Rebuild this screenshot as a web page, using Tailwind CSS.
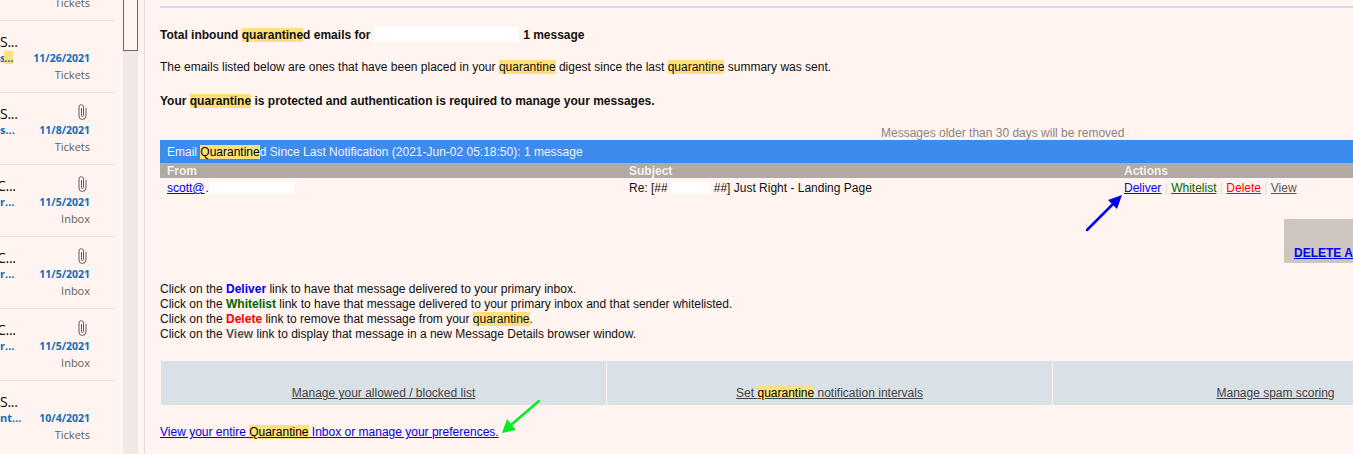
<!DOCTYPE html>
<html>
<head>
<meta charset="utf-8">
<script src="https://cdn.jsdelivr.net/npm/@tailwindcss/browser@4"></script>
</head>
<body class="m-0 bg-[#fff4ef]">
<div class="relative flex w-[1353px] h-[454px] overflow-hidden bg-[#fff4ef] font-['Liberation_Sans',Arial,sans-serif] text-[12px] text-[#111]">

  <!-- Message list -->
  <aside class="flex w-[145px] h-[454px] shrink-0 border-r border-[#e3dcd8] font-['Open_Sans',sans-serif]">
    <div class="w-[115px] shrink-0 -mt-[52px] overflow-hidden">
      <div class="relative h-[73px] border-b border-[#e6deda]">
        <div class="absolute right-[25px] top-[47px] text-[11px] leading-[16px] text-[#605e5c]">Tickets</div>
      </div>
      <div class="relative h-[72px] border-b border-[#e6deda]">
        <div class="absolute left-0 top-[11px] text-[14px] leading-[20px] tracking-[-0.3px] text-black">S...</div>
        <div class="absolute left-0 top-[30px] flex text-[11px] leading-[13px] font-bold text-[#0f6cbd]"><span class="w-[4px] overflow-hidden">s</span><span class="w-[9px] bg-[#ffe07c]">...</span></div>
        <div class="absolute right-[25px] top-[29px] text-[10.5px] leading-[16px] font-bold text-[#0f6cbd]">11/26/2021</div>
        <div class="absolute right-[25px] top-[46px] text-[11px] leading-[16px] text-[#605e5c]">Tickets</div>
      </div>
      <div class="relative h-[72px] border-b border-[#e6deda]">
        <div class="absolute left-0 top-[11px] text-[14px] leading-[20px] tracking-[-0.3px] text-black">S...</div>
        <div class="absolute right-[28px] top-[11px]"><svg class="block" width="9" height="16" viewBox="0 0 9 16" fill="none" stroke="#605e5c" stroke-width="1"><path d="M3.5 4V11.5a1 1 0 0 0 2 0V3a2.25 2.25 0 0 0-4.5 0V12a3.5 3.5 0 0 0 7 0V4"/></svg></div>
        <div class="absolute left-0 top-[29px] text-[11px] leading-[15px] font-bold text-[#0f6cbd]">s...</div>
        <div class="absolute right-[25px] top-[29px] text-[10.5px] leading-[16px] font-bold text-[#0f6cbd]">11/8/2021</div>
        <div class="absolute right-[25px] top-[46px] text-[11px] leading-[16px] text-[#605e5c]">Tickets</div>
      </div>
      <div class="relative h-[72px] border-b border-[#e6deda]">
        <div class="absolute -left-[3px] top-[11px] text-[14px] leading-[20px] tracking-[-0.3px] text-black">C...</div>
        <div class="absolute right-[28px] top-[11px]"><svg class="block" width="9" height="16" viewBox="0 0 9 16" fill="none" stroke="#605e5c" stroke-width="1"><path d="M3.5 4V11.5a1 1 0 0 0 2 0V3a2.25 2.25 0 0 0-4.5 0V12a3.5 3.5 0 0 0 7 0V4"/></svg></div>
        <div class="absolute left-0 top-[29px] text-[11px] leading-[15px] font-bold text-[#0f6cbd]">r...</div>
        <div class="absolute right-[25px] top-[29px] text-[10.5px] leading-[16px] font-bold text-[#0f6cbd]">11/5/2021</div>
        <div class="absolute right-[25px] top-[46px] text-[11px] leading-[16px] text-[#605e5c]">Inbox</div>
      </div>
      <div class="relative h-[72px] border-b border-[#e6deda]">
        <div class="absolute -left-[3px] top-[11px] text-[14px] leading-[20px] tracking-[-0.3px] text-black">C...</div>
        <div class="absolute right-[28px] top-[11px]"><svg class="block" width="9" height="16" viewBox="0 0 9 16" fill="none" stroke="#605e5c" stroke-width="1"><path d="M3.5 4V11.5a1 1 0 0 0 2 0V3a2.25 2.25 0 0 0-4.5 0V12a3.5 3.5 0 0 0 7 0V4"/></svg></div>
        <div class="absolute left-0 top-[29px] text-[11px] leading-[15px] font-bold text-[#0f6cbd]">r...</div>
        <div class="absolute right-[25px] top-[29px] text-[10.5px] leading-[16px] font-bold text-[#0f6cbd]">11/5/2021</div>
        <div class="absolute right-[25px] top-[46px] text-[11px] leading-[16px] text-[#605e5c]">Inbox</div>
      </div>
      <div class="relative h-[72px] border-b border-[#e6deda]">
        <div class="absolute -left-[3px] top-[11px] text-[14px] leading-[20px] tracking-[-0.3px] text-black">C...</div>
        <div class="absolute right-[28px] top-[11px]"><svg class="block" width="9" height="16" viewBox="0 0 9 16" fill="none" stroke="#605e5c" stroke-width="1"><path d="M3.5 4V11.5a1 1 0 0 0 2 0V3a2.25 2.25 0 0 0-4.5 0V12a3.5 3.5 0 0 0 7 0V4"/></svg></div>
        <div class="absolute left-0 top-[29px] text-[11px] leading-[15px] font-bold text-[#0f6cbd]">r...</div>
        <div class="absolute right-[25px] top-[29px] text-[10.5px] leading-[16px] font-bold text-[#0f6cbd]">11/5/2021</div>
        <div class="absolute right-[25px] top-[46px] text-[11px] leading-[16px] text-[#605e5c]">Inbox</div>
      </div>
      <div class="relative h-[73px]">
        <div class="absolute left-0 top-[11px] text-[14px] leading-[20px] tracking-[-0.3px] text-black">S...</div>
        <div class="absolute left-0 top-[29px] text-[11px] leading-[15px] font-bold text-[#0f6cbd]">nt...</div>
        <div class="absolute right-[25px] top-[29px] text-[10.5px] leading-[16px] font-bold text-[#0f6cbd]">10/4/2021</div>
        <div class="absolute right-[25px] top-[46px] text-[11px] leading-[16px] text-[#605e5c]">Tickets</div>
      </div>
      <div class="h-[1px] border-t border-dotted border-[#222]"></div>
    </div>
    <div class="ml-[8px] w-[15px] h-full bg-[#f0e8e4]">
      <div class="h-[51px] bg-[#fff4ef] border border-[#6f6866] border-t-0"></div>
    </div>
  </aside>

  <!-- Digest -->
  <main class="w-[1300px] shrink-0 pl-[15px]">
    <div class="mt-[6px] h-[2px] bg-[#d6d6f2]"></div>

    <p class="mt-[20px] h-[14px] leading-[14px] font-bold">Total inbound <span class="bg-[#ffe07c]">quarantine</span>d emails for <span class="relative inline-block w-[145px] h-[15px] bg-white align-top -mr-[3px] -mt-[1px]"></span>: 1 message</p>
    <p class="mt-[18px] h-[14px] leading-[14px]">The emails listed below are ones that have been placed in your <span class="bg-[#ffe07c]">quarantine</span> digest since the last <span class="bg-[#ffe07c]">quarantine</span> summary was sent.</p>
    <p class="mt-[20px] h-[14px] leading-[14px] font-bold">Your <span class="bg-[#ffe07c]">quarantine</span> is protected and authentication is required to manage your messages.</p>

    <p class="mt-[18px] ml-[721px] h-[14px] leading-[14px] text-[#8c8480]">Messages older than 30 days will be removed</p>

    <div class="mt-0 h-[23px] bg-[#3d8bed] pl-[7px] leading-[25px] text-[#f4f4f4]">Email <span class="bg-[#ffe07c] text-black">Quarantine</span>d Since Last Notification (2021-Jun-02 05:18:50): 1 message</div>
    <div class="flex h-[15px] bg-[#b1a9a3] pl-[7px] leading-[17px] font-bold text-[#f4f0ec]">
      <div class="w-[462px]">From</div>
      <div class="w-[495px]">Subject</div>
      <div>Actions</div>
    </div>
    <div class="flex h-[18px] pl-[7px] leading-[20px]">
      <div class="w-[462px]"><a href="#" class="text-[#0000ee] underline">scott@</a><span class="ml-[1px]">.</span><span class="inline-block w-[85px] h-[12px] bg-white align-[-2px]"></span></div>
      <div class="w-[495px]">Re: [##<span class="inline-block w-[39px] h-[12px] ml-[4px] mr-[3px] bg-white align-[-2px]"></span>##] Just Right - Landing Page</div>
      <div class="whitespace-nowrap">
        <a href="#" class="text-[#0000ee] underline">Deliver</a>
        <span class="text-[#ddd]">|</span>
        <a href="#" class="text-[#006400] underline">Whitelist</a>
        <span class="text-[#ddd]">|</span>
        <a href="#" class="text-[#ff0000] underline">Delete</a>
        <span class="text-[#ddd]">|</span>
        <a href="#" class="text-[#555] underline">View</a>
      </div>
    </div>

    <div class="mt-[23px] ml-[1124px] h-[44px] w-[160px] bg-[#cdc5c0] pl-[10px] pt-[27px] leading-[14px] font-bold">
      <a href="#" class="text-[#0000ee] underline whitespace-nowrap">DELETE ALL</a>
    </div>

    <div class="mt-[19px] leading-[15px]">
      <p>Click on the <b class="text-[#0000ee]">Deliver</b> link to have that message delivered to your primary inbox.</p>
      <p>Click on the <b class="text-[#006400]">Whitelist</b> link to have that message delivered to your primary inbox and that sender whitelisted.</p>
      <p>Click on the <b class="text-[#ff0000]">Delete</b> link to remove that message from your <span class="bg-[#ffe07c]">quarantine</span>.</p>
      <p>Click on the <b class="text-[#555]">View</b> link to display that message in a new Message Details browser window.</p>
    </div>

    <div class="mt-[19px] ml-[1px] flex gap-[1px] h-[44px]">
      <div class="w-[445px] shrink-0 bg-[#d9e0e6] pt-[25px] text-center leading-[15px]"><a href="#" class="text-[#444] underline">Manage your allowed / blocked list</a></div>
      <div class="w-[445px] shrink-0 bg-[#d9e0e6] pt-[25px] text-center leading-[15px]"><a href="#" class="text-[#444] underline">Set <span class="bg-[#ffe07c] text-black">quarantine</span> notification intervals</a></div>
      <div class="w-[445px] shrink-0 bg-[#d9e0e6] pt-[25px] text-center leading-[15px]"><a href="#" class="text-[#444] underline">Manage spam scoring</a></div>
    </div>

    <p class="mt-[20px] leading-[14px]"><a href="#" class="text-[#0000ee] underline">View your entire <span class="bg-[#ffe07c] text-black">Quarantine</span> Inbox or manage your preferences.</a></p>
  </main>

  <!-- Annotation arrows -->
  <svg class="absolute left-0 top-0 pointer-events-none" width="1353" height="454" viewBox="0 0 1353 454" fill="none">
    <path d="M1087 230 L1113 204" stroke="#0000ee" stroke-width="2.5" stroke-linecap="round"/>
    <path d="M1122 195 L1117 209 L1108 200 Z" fill="#0000ee"/>
    <path d="M539 401 L511 425" stroke="#00ee22" stroke-width="2.5" stroke-linecap="round"/>
    <path d="M502 433 L507 419 L516 430 Z" fill="#00ee22"/>
  </svg>
</div>
</body>
</html>
